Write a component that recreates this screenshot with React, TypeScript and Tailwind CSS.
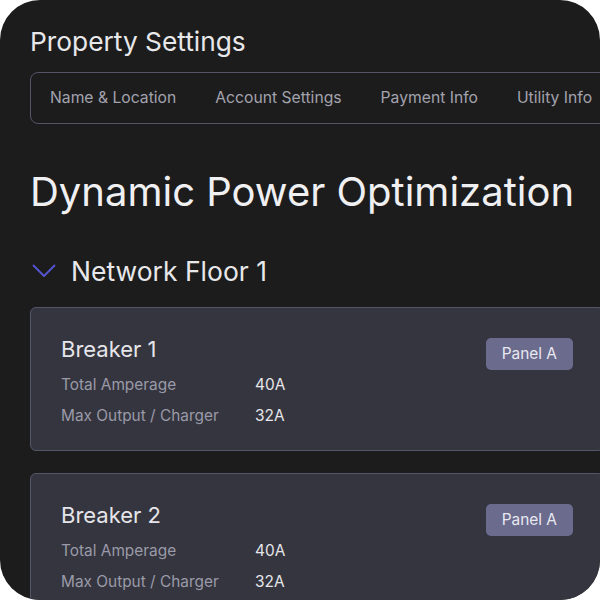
import React from "react";

function Card({ name }: { name: string }) {
  return (
    <div className="w-[574px] shrink-0 rounded-[6px] border border-[#55556a] bg-[#35353f] pl-[30px] pr-[30px] pt-[27px] pb-[19px]">
      <div className="flex items-start justify-between">
        <div>
          <div className="text-[22px] leading-[28px] text-[#e6e6ea]">{name}</div>
          <div className="mt-[6px] flex text-[15.4px] leading-[31px]">
            <div className="w-[194px] text-[#9a9aa8]">Total Amperage</div>
            <div className="text-[#e6e6ea]">40A</div>
          </div>
          <div className="flex text-[15.4px] leading-[31px]">
            <div className="w-[194px] text-[#9a9aa8]">Max Output / Charger</div>
            <div className="text-[#e6e6ea]">32A</div>
          </div>
        </div>
        <div className="mt-[3px] rounded-[5px] bg-[#6b6b8e] px-[16px] text-[15.4px] leading-[32px] text-[#e8e8f0]">Panel A</div>
      </div>
    </div>
  );
}

export default function App() {
  return (
    <div className="h-[600px] w-[600px] bg-white">
      <div
        className="h-[600px] w-[600px] overflow-hidden rounded-[40px] bg-[#1c1c1d] pl-[30px]"
        style={{ fontFamily: "Inter, 'Noto Sans', sans-serif" }}
      >
        <div className="pt-[26px] text-[26.3px] leading-[32px] text-[#e8e8ea]">Property Settings</div>
        <div className="mt-[14px] flex h-[52px] w-[600px] items-center gap-[39px] rounded-[8px] border border-[#55556a] pl-[19px] text-[15.7px] text-[#a3a3ad]">
          <span>Name &amp; Location</span>
          <span>Account Settings</span>
          <span>Payment Info</span>
          <span>Utility Info</span>
        </div>
        <div className="mt-[42px] text-[40px] leading-[52px] text-[#f0f0f2]">Dynamic Power Optimization</div>
        <div className="mt-[37px] flex items-center gap-[15px]">
          <svg width="24" height="14" viewBox="0 0 24 14" className="ml-[2px]">
            <path d="M1.5 1.5 L12 12 L22.5 1.5" fill="none" stroke="#5656d4" strokeWidth="1.8" strokeLinecap="round" strokeLinejoin="round" />
          </svg>
          <div className="text-[26.5px] leading-[32px] text-[#e8e8ea]">Network Floor 1</div>
        </div>
        <div className="mt-[20px] flex flex-col gap-[22px]">
          <Card name="Breaker 1" />
          <Card name="Breaker 2" />
        </div>
      </div>
    </div>
  );
}
